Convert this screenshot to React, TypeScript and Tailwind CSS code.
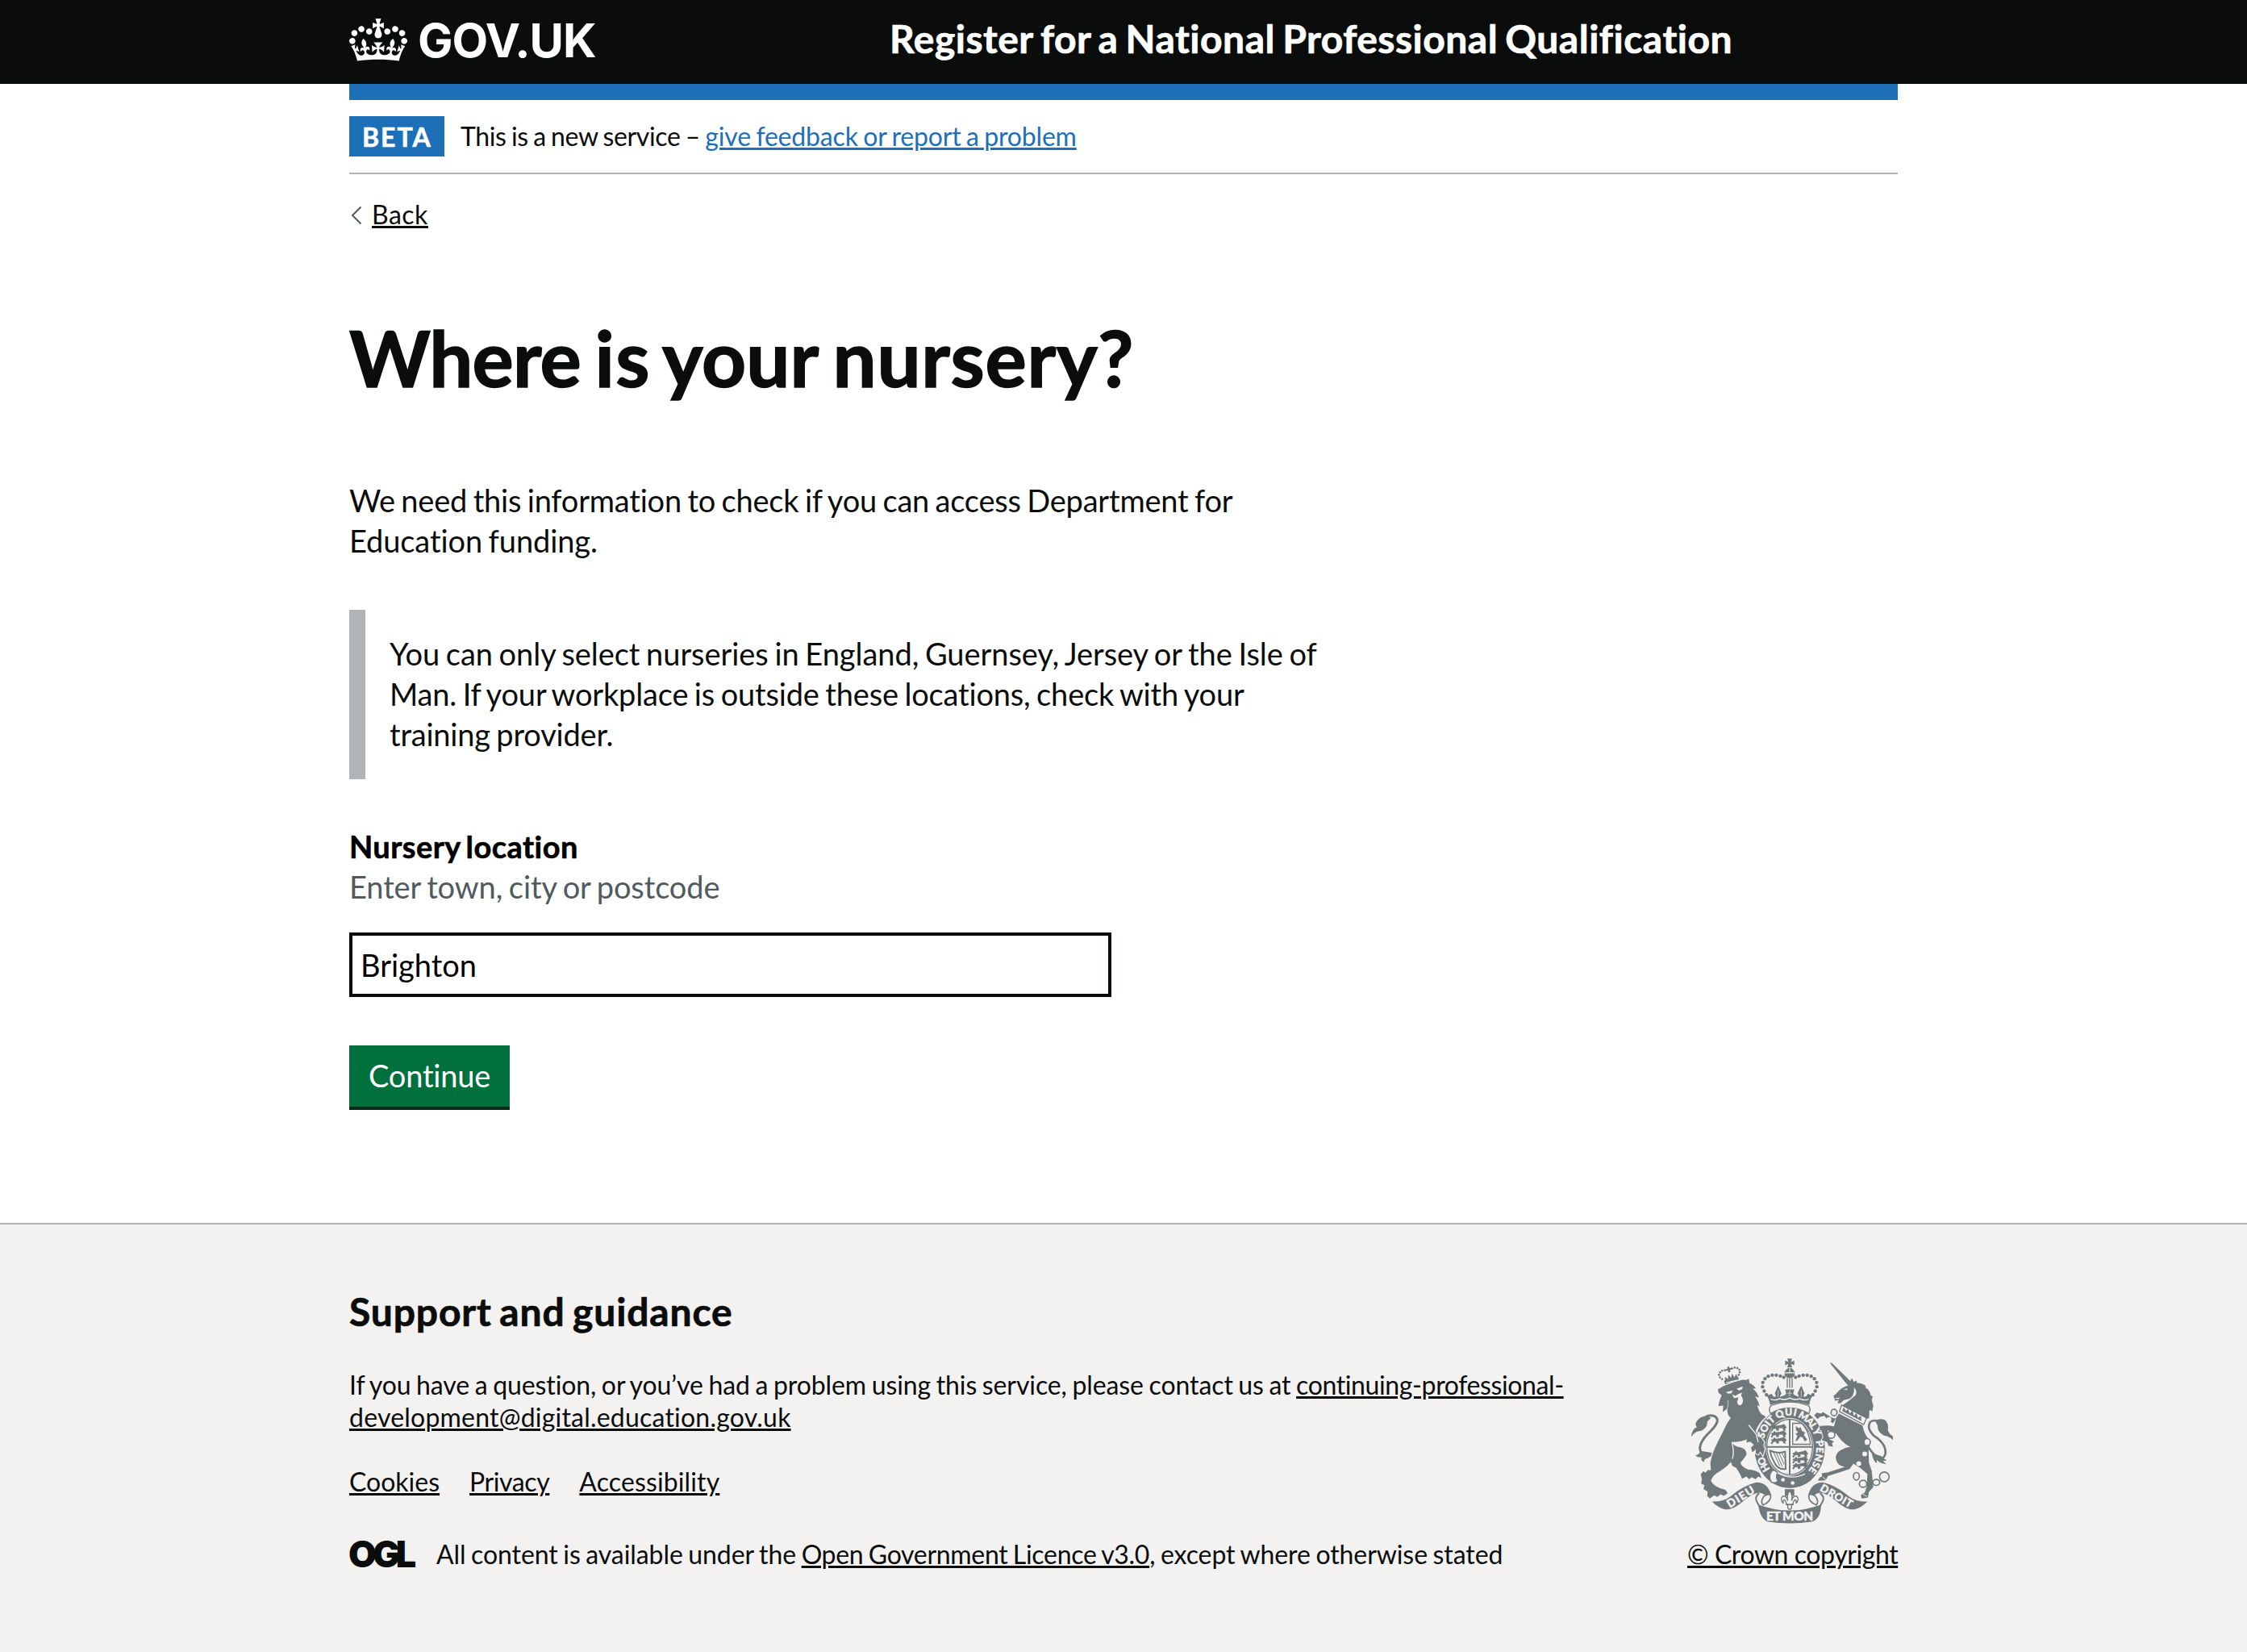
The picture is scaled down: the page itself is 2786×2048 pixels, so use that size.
import type { ReactNode } from 'react';

const LATO = "font-['Lato','Open_Sans',sans-serif]";
const LINK = 'underline decoration-[3px] underline-offset-[2px]';

function Crown() {
  return (
    <svg viewBox="0 0 132 97" className="mt-[23px] h-[53px] w-[72px] shrink-0" fill="currentColor" aria-hidden="true">
      <path
        fillRule="evenodd"
        d="M25 30.2c3.5 1.5 7.7-.2 9.1-3.7 1.5-3.6-.2-7.8-3.9-9.2-3.6-1.4-7.6.3-9.1 3.9-1.4 3.5.3 7.5 3.9 9zM9 39.5c3.6 1.5 7.8-.2 9.2-3.7 1.5-3.6-.2-7.8-3.9-9.1-3.6-1.5-7.6.2-9.1 3.8-1.4 3.5.3 7.5 3.8 9zM4.4 57.2c3.5 1.5 7.7-.2 9.1-3.8 1.5-3.6-.2-7.7-3.9-9.1-3.5-1.5-7.6.3-9.1 3.8-1.4 3.5.3 7.6 3.9 9.1zm38.3-21.4c3.5 1.5 7.7-.2 9.1-3.8 1.5-3.6-.2-7.7-3.9-9.1-3.6-1.5-7.6.3-9.1 3.8-1.3 3.6.4 7.7 3.9 9.1zm64.4-5.6c-3.6 1.5-7.8-.2-9.1-3.7-1.5-3.6.2-7.8 3.8-9.2 3.6-1.4 7.7.3 9.2 3.9 1.3 3.5-.4 7.5-3.9 9zm15.9 9.3c-3.6 1.5-7.7-.2-9.1-3.7-1.5-3.6.2-7.8 3.7-9.1 3.6-1.5 7.7.2 9.2 3.8 1.5 3.5-.3 7.5-3.8 9zm4.7 17.7c-3.6 1.5-7.8-.2-9.2-3.8-1.5-3.6.2-7.7 3.9-9.1 3.6-1.5 7.7.3 9.2 3.8 1.3 3.5-.4 7.6-3.9 9.1zM89.3 35.8c-3.6 1.5-7.8-.2-9.2-3.8-1.4-3.6.2-7.7 3.9-9.1 3.6-1.5 7.7.3 9.2 3.8 1.4 3.6-.3 7.7-3.9 9.1zM69.7 17.7l8.9 4.7V9.3l-8.9 2.8c-.2-.3-.5-.6-.9-.9L72.4 0H59.6l3.5 11.2c-.3.3-.6.5-.9.9l-8.8-2.8v13.1l8.8-4.7c.3.3.6.7.9.9l-5 15.4v.1c-.2.8-.4 1.6-.4 2.4 0 4.1 3.1 7.5 7 8.1h.2c.3 0 .7.1 1 .1.4 0 .7 0 1-.1h.2c4-.6 7.1-4.1 7.1-8.1 0-.8-.1-1.7-.4-2.4V34l-5.1-15.4c.4-.2.7-.6 1-.9zM66 92.8c16.9 0 32.8 1.1 47.1 3.2 4-16.9 8.9-26.7 14-33.5l-9.6-3.4c1 4.9 1.1 7.2 0 10.2-1.5-1.4-3-4.3-4.2-8.7L108.6 76c2.8-2 5-3.2 7.5-3.3-4.4 9.4-10 11.9-13.6 11.2-4.3-.8-6.3-4.6-5.6-7.9 1-4.7 5.7-5.9 8-.5 4.3-8.7-3-11.4-7.6-8.8 7.1-7.2 7.9-13.5 2.1-21.1-8 6.1-8.1 12.3-4.5 20.8-4.7-5.4-12.1-2.5-9.5 6.2 3.4-5.2 7.9-2 7.2 3.1-.6 4.3-6.4 7.8-13.5 7.2-10.3-.9-10.9-8-11.2-13.8 2.5-.5 7.1 1.8 11 7.3L80.2 60c-4.1 4.4-8 5.3-12.3 5.4 1.4-4.4 8-11.6 8-11.6H55.5s6.4 7.2 7.9 11.6c-4.2-.1-8-1-12.3-5.4l1.4 16.4c3.9-5.5 8.5-7.7 10.9-7.3-.3 5.8-.9 12.8-11.1 13.8-7.2.6-12.9-2.9-13.5-7.2-.7-5 3.8-8.3 7.1-3.1 2.7-8.7-4.6-11.6-9.4-6.2 3.7-8.5 3.6-14.7-4.6-20.8-5.8 7.6-5 13.9 2.2 21.1-4.7-2.6-11.9.1-7.7 8.8 2.3-5.5 7.1-4.2 8.1.5.7 3.3-1.3 7.1-5.7 7.9-3.5.7-9-1.8-13.5-11.2 2.5.1 4.7 1.3 7.5 3.3l-4.7-15.4c-1.2 4.4-2.7 7.2-4.3 8.7-1.1-3-.9-5.3 0-10.2l-9.5 3.4c5 6.9 9.9 16.7 14 33.5 14.8-2.1 30.8-3.2 47.7-3.2z"
      />
    </svg>
  );
}

const INK = '#6f787b';
const PAPER = '#f3f2f1';

const BEADS: [number, number][] = [
  [331, 176], [322, 162], [316, 146], [317, 130], [325, 116], [337, 107], [352, 103], [367, 103], [382, 106], [395, 111],
];

// word, centre along the garter, length
const MOTTO: [string, number, number][] = [
  ['HO', 112, 54], ['SOIT', 246, 84], ['QUI', 330, 72], ['MAL', 410, 74], ['Y', 460, 24], ['PENSE', 548, 118],
];

function Lion() {
  return (
    <g>
      {/* tail */}
      <path d="M130 398Q84 412 83 372Q86 345 122 312Q162 272 140 257Q118 247 98 262" fill="none" stroke={INK} strokeWidth="9" />
      <path d="M124 262Q98 247 78 266Q60 284 72 296Q52 304 51 332Q66 310 88 310Q112 298 110 276z" />
      <path d="M86 385Q78 402 65 400Q74 412 90 408Q84 422 98 426Q98 414 112 412Q126 404 134 392z" />
      {/* small crown */}
      <g transform="rotate(-14 194 105)">
        <path d="M168 118L224 118L221 136L171 136z" />
        <path d="M172 120L176 104L184 116L190 100L197 114L204 100L210 116L218 104L222 120z" />
        {[[163, 110], [157, 102], [156, 92], [162, 84], [171, 80], [181, 81], [209, 81], [219, 80], [228, 84], [234, 92], [233, 102], [227, 110]].map(([x, y]) => (
          <circle key={`${x}-${y}`} cx={x} cy={y} r="4" />
        ))}
        <path d="M192 92V84H185V78H192V71H200V78H207V84H200V92z" />
        <path d="M174 127H218" stroke={PAPER} strokeWidth="3" />
      </g>
      {/* body */}
      <path
        stroke={PAPER}
        strokeWidth="7"
        paintOrder="stroke"
        d="M150 156L170 144Q205 128 242 120L256 121L265 116L267 132Q284 140 291 152L280 153Q298 168 302 186L288 182Q302 200 305 220L296 214Q302 238 312 248Q322 252 328 258Q300 282 290 312Q304 324 312 338L322 352L319 364L324 378L317 402L308 386L300 398L290 392L292 378L278 390L273 372L284 362L270 350L256 354L258 342L238 348Q216 352 203 352Q206 368 236 372Q258 378 256 400Q244 418 234 428Q236 442 262 454Q292 456 306 468L312 486L300 480L290 490L276 482L266 490L256 480L240 488L232 470L218 448L204 440L198 426L206 414Q190 440 158 460Q128 476 124 496Q134 516 160 524Q182 526 186 542L172 552L160 546L148 556L136 550L120 562L110 552L112 536L96 526L100 512L88 506L90 488L86 472L96 460L104 466L112 456L124 456L122 430Q126 398 150 350Q168 316 184 282L198 262Q186 256 184 228L168 240L170 216L152 218Q154 198 164 178L152 168z"
      />
      <path d="M180 166L206 160L200 170L188 172zM220 153L243 145L240 155L228 160z" fill={PAPER} />
      <path d="M202 174L214 180L228 172L240 168L236 178L242 190Q246 208 234 215Q222 216 222 202L226 186L210 188z" fill={PAPER} />
      <path d="M206 170L228 164L220 178z" />
      <path d="M264 288L292 322L300 352" fill="none" stroke={PAPER} strokeWidth="4" />
      <path d="M184 232Q190 210 188 196" fill="none" stroke={PAPER} strokeWidth="2" />
      <path d="M204 414Q212 390 202 352" fill="none" stroke={PAPER} strokeWidth="4" />
    </g>
  );
}

function Unicorn() {
  return (
    <g>
      {/* tail */}
      <path d="M708 368Q732 408 760 414Q782 398 768 366Q756 344 730 328Q702 300 716 278Q728 266 750 276" fill="none" stroke={INK} strokeWidth="8" />
      <path d="M734 272Q752 262 772 270Q786 284 782 306Q786 322 801 330L801 344Q786 330 768 328Q742 314 744 290z" />
      <path d="M722 392Q728 426 742 430L740 418Q754 432 776 434L764 422L778 420Q764 412 758 404z" />
      {/* horn and head */}
      <path d="M566 57L574 58L650 132L634 142z" />
      <path d="M636 140L648 114L656 128L664 122L668 132Q690 132 702 146L696 148Q716 158 718 178L726 182L722 196L728 216L724 238L714 232L712 262Q706 268 700 262L612 216L626 206Q640 196 650 188L618 196L606 208L594 206L600 196L586 198L580 180L590 172Q606 150 636 140z" />
      <path d="M616 156L630 158L632 152zM656 148Q670 162 662 178Q650 190 638 192Q660 178 656 148z" fill={PAPER} />
      <path d="M582 190L604 186L598 192z" fill={PAPER} />
      {/* collar */}
      <path d="M610 214L703 262L692 287L602 238z" fill={PAPER} stroke={INK} strokeWidth="4" />
      <path d="M612 236L618 222L626 236L634 228L640 246L650 234L656 254L666 244L670 262L682 254L684 274z" />
      {/* forelegs */}
      <path
        stroke={PAPER}
        strokeWidth="6"
        paintOrder="stroke"
        d="M594 256L578 282Q556 268 546 254L530 258L520 266L508 252L518 242L534 246L540 240L560 252Q580 268 600 262zM596 298Q574 290 560 290L530 292L524 304L536 310L542 334L536 344L556 352L562 366L578 370L574 356L582 350L566 342L560 322L558 308L590 320z"
      />
      {/* body and hind legs */}
      <path d="M600 246L688 290Q692 318 710 340Q720 362 710 384L712 430L722 458L728 520L712 536L708 558L684 562L682 548L696 540L704 516L706 470Q680 446 654 432L640 452L560 478L550 494L522 496L528 484L538 480L536 468L560 464L622 444Q590 440 588 408Q592 378 642 370Q600 348 580 300L590 262z" />
      <path d="M540 482L552 492M690 546L704 554" stroke={PAPER} strokeWidth="3" />
      {/* chain */}
      <g fill={PAPER} stroke={INK} strokeWidth="5">
        <ellipse cx="582" cy="242" rx="11" ry="12" />
        <ellipse cx="563" cy="268" rx="9" ry="9" stroke="none" />
        <ellipse cx="571" cy="325" rx="14" ry="13" />
        <ellipse cx="705" cy="352" rx="12" ry="13" />
        <circle cx="696" cy="396" r="9" stroke="none" />
        <circle cx="674" cy="432" r="9" stroke="none" />
        <ellipse cx="665" cy="479" rx="11" ry="14" fill="none" />
        <ellipse cx="690" cy="507" rx="14" ry="13" fill="none" />
        <ellipse cx="739" cy="502" rx="13" ry="11" fill="none" />
        <circle cx="769" cy="481" r="18" fill="none" />
      </g>
    </g>
  );
}

function CenterCrown() {
  return (
    <g>
      {BEADS.map(([x, y]) => (
        <g key={x}>
          <circle cx={x} cy={y} r="6.5" />
          <circle cx={834 - x} cy={y} r="6.5" />
        </g>
      ))}
      <path d="M408 41H426L422 54L434 49V66L422 61L426 74H408L412 61L400 66V49L412 54z" />
      <path d="M397 92Q417 60 437 92z" />
      <path d="M397 96H437Q434 114 417 114Q400 114 397 96z" />
      <path d="M417 74V96" stroke={PAPER} strokeWidth="3" />
      <path d="M408 114V150M417 114V150M426 114V150" stroke={INK} strokeWidth="4" />
      <path d="M324 168L338 178L350 172Q354 186 366 182L362 170L374 142L386 170L380 184L398 178L404 172L400 156H434L430 172L436 178L452 184L446 170L460 142L472 170L468 182Q480 186 484 172L496 178L510 168Q492 190 490 214Q417 190 344 214Q342 190 324 168z" />
      <path d="M346 192Q362 200 380 190Q398 198 417 188Q436 198 454 190Q472 200 488 192" fill="none" stroke={PAPER} strokeWidth="4" />
      <path d="M417 160V182M408 170H426M374 160V184M460 160V184" stroke={PAPER} strokeWidth="2" />
    </g>
  );
}

function Garter() {
  return (
    <g>
      <ellipse cx="417" cy="373" rx="131" ry="150" />
      <ellipse cx="417" cy="370" rx="89" ry="108" fill={PAPER} />
      <ellipse cx="417" cy="370" rx="85" ry="103" fill="none" stroke={INK} strokeWidth="4" />
      <path d="M417 268V472M333 370H501" stroke={INK} strokeWidth="6" />
      {/* passant lions */}
      {[[352, 292], [352, 316], [352, 340], [432, 390], [432, 412], [432, 434]].map(([x, y]) => (
        <path
          key={`${x}-${y}`}
          transform={`translate(${x} ${y})`}
          d="M-6 4L4 0L8-6L14 0L34-4L44-8L50 0L54 6L48 10L52 18L42 16L38 8L24 8L26 16L16 18L14 10L4 12L0 20L-6 16L0 8z"
        />
      ))}
      {/* harp */}
      <path d="M344 384Q372 396 400 388L402 452Q372 456 358 424Q346 404 344 384z" fill="none" stroke={INK} strokeWidth="6" />
      <path d="M358 392L380 440M368 393L390 444M378 393L396 434M388 392L398 412" stroke={INK} strokeWidth="3" />
      {/* rampant lion */}
      <path d="M428 282H462Q490 312 494 360H428z" fill="none" stroke={INK} strokeWidth="4" />
      <path d="M440 292L450 300L458 296L462 310L474 316L470 326L482 342L474 350L464 334L456 332L446 346L438 348L446 328L438 322L448 316L440 306z" />
      {/* strap end and buckle */}
      <path d="M352 462Q420 500 490 470L496 494Q450 530 390 516L350 494z" />
      <path d="M352 458Q336 478 348 500Q362 508 374 496Q362 482 372 466Q362 454 352 458z" fill={PAPER} stroke={INK} strokeWidth="4" />
      <path d="M372 466Q424 496 474 470" fill="none" stroke={PAPER} strokeWidth="4" />
      <circle cx="392" cy="492" r="7" fill={PAPER} />
      <circle cx="428" cy="504" r="7" fill={PAPER} />
      <path d="M348 216Q417 190 486 216Q498 226 488 246Q417 204 346 246Q336 226 348 216z" fill={PAPER} stroke={INK} strokeWidth="4" />
    </g>
  );
}

function Motto() {
  return (
    <g>
      <path id="motto" d="M417 491A99 119 0 0 1 417 253A99 119 0 0 1 417 491" fill="none" />
      <g fill={PAPER} stroke={PAPER} strokeWidth="1.200" fontFamily="Lato, sans-serif" fontWeight="900" fontSize="37" textAnchor="middle">
        {MOTTO.map(([word, offset, length]) => (
          <text key={word} textLength={length}>
            <textPath href="#motto" startOffset={offset} textLength={length}>{word}</textPath>
          </text>
        ))}
      </g>
    </g>
  );
}

function Ribbon() {
  return (
    <g>
      <path d="M128 573Q170 574 196 554Q244 514 292 502Q334 500 348 548Q346 566 334 564Q330 544 304 540Q276 544 246 570Q206 606 176 602Q150 596 128 573z" />
      <path d="M706 573Q664 574 638 554Q590 514 542 502Q500 500 486 548Q488 566 500 564Q504 544 530 540Q558 544 588 570Q628 606 658 602Q684 596 706 573z" />
      <path d="M304 542Q284 556 296 576Q306 592 312 606" fill="none" stroke={INK} strokeWidth="6" />
      <path d="M346 548Q350 572 318 586Q306 574 322 552Q334 544 346 548z" fill={PAPER} stroke={INK} strokeWidth="5" />
      <path d="M530 542Q550 556 538 576Q528 592 522 606" fill="none" stroke={INK} strokeWidth="6" />
      <path d="M488 548Q484 572 516 586Q528 574 512 552Q500 544 488 548z" fill={PAPER} stroke={INK} strokeWidth="5" />
      <path d="M300 584Q358 606 417 606Q476 606 534 584Q532 640 498 648Q417 660 336 648Q306 636 300 584z" />
      {/* fleur-de-lis */}
      <path d="M399 527H434V552H399z" />
      <path
        d="M417 532Q430 550 424 570Q430 548 444 554Q454 566 440 580Q444 568 436 566Q430 572 428 584H424V592Q424 602 417 602Q410 602 410 592V584H406Q404 572 398 566Q390 568 394 580Q380 566 390 554Q404 548 410 570Q404 550 417 532z"
        fill={PAPER}
        stroke={INK}
        strokeWidth="4"
      />
      <path d="M402 584H432" stroke={INK} strokeWidth="5" />
      <g fill={PAPER} stroke={PAPER} strokeWidth="1.200" fontFamily="Lato, sans-serif" fontWeight="900" textAnchor="middle">
        <text transform="translate(242 568) rotate(-32)" fontSize="42" textLength="112">DIEU</text>
        <text transform="translate(584 564) rotate(30)" fontSize="40" textLength="132">DROIT</text>
        <text x="417" y="644" fontSize="46" textLength="174">ET MON</text>
      </g>
    </g>
  );
}

function Crest() {
  return (
    <svg viewBox="51 41 750 614" className="ml-[5px] h-[205px] w-[250px]" fill={INK} aria-hidden="true">
      <Garter />
      <CenterCrown />
      <Lion />
      <Unicorn />
      <Motto />
      <Ribbon />
    </svg>
  );
}

function Line({ className, children }: { className: string; children: ReactNode }) {
  return <span className={`block whitespace-pre ${className}`}>{children}</span>;
}

export default function App() {
  return (
    <div className={`flex min-h-[2048px] w-[2786px] flex-col bg-white text-[#0b0c0c] ${LATO}`}>
      <header className="h-[104px] bg-[#0b0c0c] text-white">
        <div className="mx-auto flex w-[1920px] items-start">
          <Crown />
          <a className="ml-[13px] mt-[20px] w-[240px] whitespace-nowrap font-['Inter',sans-serif] text-[58px] font-bold leading-[60px] tracking-[-1.1px]">GOV.UK</a>
          <a className="ml-[345px] mt-[18px] whitespace-nowrap text-[48px] font-bold leading-[60px] tracking-[0.5px] [word-spacing:-3px] [-webkit-text-stroke:0.7px]">
            Register for a National Professional Qualification
          </a>
        </div>
      </header>

      <div className="mx-auto w-[1920px]">
        <div className="h-[20px] bg-[#1d70b8]" />
        <div className="flex items-start border-b-2 border-[#b1b4b6] py-[20px]">
          <strong className="h-[50px] w-[118px] bg-[#1d70b8] pl-[16px] pt-px text-[32px] font-bold leading-[50px] tracking-[2px] text-white [-webkit-text-stroke:0.6px]">BETA</strong>
          <span className="ml-[20px] mt-[5px] whitespace-pre text-[32px] leading-[40px] [word-spacing:-1.5px]">
            <span className="tracking-[-0.35px]">This is a new service – </span>
            <a className={`tracking-[-0.18px] text-[#1d70b8] ${LINK}`}>give feedback or report a problem</a>
          </span>
        </div>

        <a className="mt-[30px] flex h-[40px] items-start text-[32px] leading-[40px]">
          <svg viewBox="0 0 14 24" className="ml-[2px] mt-[9px] h-[24px] w-[14px]" fill="none" stroke="#505a5f" strokeWidth="2">
            <path d="M12.5 1.5L2 12l10.500 10.500" />
          </svg>
          <span className={`ml-[12px] tracking-[0.5px] ${LINK}`}>Back</span>
        </a>

        <main className="mt-[107px]">
          <h1 className="whitespace-pre text-[96px] font-bold leading-[100px] tracking-[-0.9px] [word-spacing:-7px] [-webkit-text-stroke:1.5px]">
            Where<span className="tracking-[1.4px]"> is</span><span className="tracking-[0.1px]"> your</span><span className="tracking-[0.7px]"> nursery?</span>
          </h1>
          <p className="mt-[102px] text-[38px] leading-[50px] [word-spacing:-2px]">
            <Line className="tracking-[-0.21px]">We need this information to check if you can access Department for</Line>
            <Line className="tracking-[-0.1px]">Education funding.</Line>
          </p>
          <div className="mt-[61px] h-[210px] border-l-[20px] border-[#b1b4b6] pl-[30px] pt-[29px] text-[38px] leading-[50px] [word-spacing:-2px]">
            <Line className="tracking-[-0.05px]">You can only select nurseries in England, Guernsey, Jersey or the Isle of</Line>
            <Line className="tracking-[-0.17px]">Man. If your workplace is outside these locations, check with your</Line>
            <Line className="tracking-[-0.2px]">training provider.</Line>
          </div>
          <label className="mt-[58px] block whitespace-nowrap text-[38px] font-bold leading-[50px] tracking-[0.45px] text-black [word-spacing:-3px] [-webkit-text-stroke:0.6px]">Nursery location</label>
          <div className="whitespace-nowrap text-[38px] leading-[50px] tracking-[-0.09px] text-[#505a5f] [word-spacing:-2px]">Enter town, city or postcode</div>
          <div className="mt-[32px] flex h-[80px] w-[945px] items-start border-[4px] border-[#0b0c0c] pl-[10px] pt-[11px] text-[38px] leading-[50px] text-black">Brighton</div>
          <button className="mt-[60px] flex h-[80px] w-[199px] items-start border-b-[4px] border-[#002d18] bg-[#00703c] pl-[24px] pt-[12px] text-[38px] leading-[50px] tracking-[-0.2px] text-white">
            Continue
          </button>
        </main>
      </div>

      <footer className="mt-[140px] flex-1 border-t-2 border-[#b1b4b6] bg-[#f3f2f1]">
        <div className="mx-auto flex w-[1920px] items-start justify-between">
          <div>
            <h2 className="mt-[78px] whitespace-nowrap text-[48px] font-bold leading-[60px] tracking-[0.85px] [word-spacing:-3px] [-webkit-text-stroke:0.7px]">Support and guidance</h2>
            <p className="mt-[41px] text-[32px] leading-[40px] [word-spacing:-1.5px]">
              <Line className="tracking-[-0.09px]">
                If you have a question, or you’ve had a problem using this service, please contact us at{' '}
                <a className={`tracking-[-0.38px] ${LINK}`}>continuing-professional-</a>
              </Line>
              <Line className="tracking-[0.21px]">
                <a className={LINK}>development@digital.education.gov.uk</a>
              </Line>
            </p>
            <nav className="mt-[40px] flex gap-[37px] text-[32px] leading-[40px]">
              <a className={LINK}>Cookies</a>
              <a className={`tracking-[-0.4px] ${LINK}`}>Privacy</a>
              <a className={`tracking-[0.13px] ${LINK}`}>Accessibility</a>
            </nav>
            <div className="mt-[50px] flex items-start text-[32px] leading-[40px]">
              <span className="w-[82px] whitespace-nowrap font-['Inter',sans-serif] text-[45px] font-black leading-[40px] tracking-[-5px]">
                <span className="ml-[-1px]">OGL</span>
              </span>
              <span className="ml-[26px] whitespace-pre tracking-[-0.08px] [word-spacing:-1.5px]">
                All content is available under the{' '}
                <a className={`tracking-[-0.3px] ${LINK}`}>Open Government Licence v3.0</a>, except where otherwise stated
              </span>
            </div>
          </div>
          <div className="mt-[166px] w-[261px]">
            <Crest />
            <a className={`mt-[18px] block whitespace-nowrap text-[32px] leading-[40px] tracking-[-0.42px] ${LINK}`}>© Crown copyright</a>
          </div>
        </div>
      </footer>
    </div>
  );
}
